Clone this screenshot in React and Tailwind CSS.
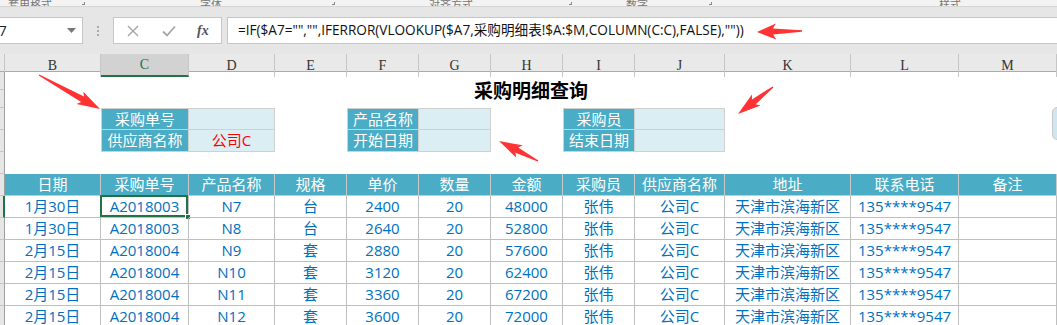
import React from "react";

const COLS =
  "grid grid-cols-[5px_96px_88px_86px_72px_72px_72px_72px_72px_90px_126px_108px_98px]";
const CJK = "font-['Open_Sans','Noto_Sans_CJK_SC',sans-serif]";

const letters = ["B", "C", "D", "E", "F", "G", "H", "I", "J", "K", "L", "M"];
const headers = ["日期", "采购单号", "产品名称", "规格", "单价", "数量", "金额", "采购员", "供应商名称", "地址", "联系电话", "备注"];
const rows = [
  ["1月30日", "A2018003", "N7", "台", "2400", "20", "48000"],
  ["1月30日", "A2018003", "N8", "台", "2640", "20", "52800"],
  ["2月15日", "A2018004", "N9", "套", "2880", "20", "57600"],
  ["2月15日", "A2018004", "N10", "套", "3120", "20", "62400"],
  ["2月15日", "A2018004", "N11", "套", "3360", "20", "67200"],
  ["2月15日", "A2018004", "N12", "套", "3600", "20", "72000"],
];

function arrow(x1, y1, x2, y2, head = 20, wing = 8, neck = 3, tail = 0.7) {
  const dx = x2 - x1, dy = y2 - y1, L = Math.hypot(dx, dy);
  const ux = dx / L, uy = dy / L, nx = -uy, ny = ux;
  const bx = x2 - ux * head, by = y2 - uy * head;
  const wx = x2 - ux * (head + 3), wy = y2 - uy * (head + 3);
  const p = [
    [x1 + nx * tail, y1 + ny * tail],
    [bx + nx * neck, by + ny * neck],
    [wx + nx * wing, wy + ny * wing],
    [x2, y2],
    [wx - nx * wing, wy - ny * wing],
    [bx - nx * neck, by - ny * neck],
    [x1 - nx * tail, y1 - ny * tail],
  ];
  return p.map((q) => q[0].toFixed(1) + "," + q[1].toFixed(1)).join(" ");
}

function RowHead({ active }) {
  return (
    <div
      className={
        "bg-[#e6e6e6] border-b border-[#c6c6c6] " +
        (active ? "border-r-2 border-r-[#217346]" : "border-r border-r-[#9f9f9f]")
      }
    />
  );
}

function Label({ children, top }) {
  return (
    <div
      className={
        "bg-[#4bacc6] text-white text-[15px] flex items-center justify-center border-l border-r border-b border-[#d0d0d0] " +
        (top ? "border-t" : "")
      }
    >
      {children}
    </div>
  );
}
function Value({ children, top }) {
  return (
    <div
      className={
        "bg-[#daeef3] text-[#ff0000] text-[15px] flex items-center justify-center border-r border-b border-[#d0d0d0] " +
        (top ? "border-t" : "")
      }
    >
      {children}
    </div>
  );
}

export default function App() {
  return (
    <div className={"relative w-[1057px] h-[325px] overflow-hidden bg-white " + CJK}>
      {/* ribbon remnant */}
      <div className="h-[7px] bg-[#f3f3f3] border-b border-[#d5d5d5] flex items-end overflow-hidden text-[11px] leading-[12px] text-[#777]">
        <span className="ml-[8px] w-[74px] mb-[-5px]">套用格式</span>
        <span className="w-[3px] h-[3px] border-r border-b border-[#888] mb-[1px]" />
        <span className="ml-[115px] w-[132px] mb-[-5px]">字体</span>
        <span className="w-[3px] h-[3px] border-r border-b border-[#888] mb-[1px]" />
        <span className="ml-[94px] w-[140px] mb-[-5px]">对齐方式</span>
        <span className="w-[3px] h-[3px] border-r border-b border-[#888] mb-[1px]" />
        <span className="ml-[54px] w-[83px] mb-[-5px]">数字</span>
        <span className="w-[3px] h-[3px] border-r border-b border-[#888] mb-[1px]" />
        <span className="ml-[227px] mb-[-5px]">样式</span>
      </div>
      <div className="h-[10px] bg-[#e6e6e6]" />
      {/* formula bar */}
      <div className="h-[27px] bg-[#e6e6e6] flex">
        <div className="w-[83px] bg-white border border-[#c6c6c6] border-l-0 flex items-center justify-between pr-[6px] overflow-hidden">
          <span className="text-[14px] text-[#222] -ml-[10px]">A7</span>
          <svg width="9" height="5" viewBox="0 0 9 5"><path d="M0 0h9L4.5 5z" fill="#777" /></svg>
        </div>
        <div className="w-[30px] flex flex-col items-center justify-center gap-[2px]">
          <span className="w-[2px] h-[2px] bg-[#aaa]" />
          <span className="w-[2px] h-[2px] bg-[#aaa]" />
          <span className="w-[2px] h-[2px] bg-[#aaa]" />
        </div>
        <div className="w-[109px] bg-white border border-[#c6c6c6] flex items-center">
          <svg className="ml-[13px]" width="12" height="12" viewBox="0 0 12 12">
            <path d="M1 1L11 11M11 1L1 11" stroke="#a6a6a6" strokeWidth="1.4" />
          </svg>
          <svg className="ml-[23px]" width="14" height="12" viewBox="0 0 14 12">
            <path d="M1 6.5L5 10.5L13 1.5" stroke="#a6a6a6" strokeWidth="1.8" fill="none" />
          </svg>
          <span className="ml-[21px] text-[14px] italic font-['Liberation_Serif',serif] text-[#555] font-bold">fx</span>
        </div>
        <div className="ml-[5px] flex-1 bg-white border border-[#c6c6c6] border-r-0 flex items-center pl-[10px] text-[13.6px] text-[#111] whitespace-nowrap">
          =IF($A7="","",IFERROR(VLOOKUP($A7,采购明细表!$A:$M,COLUMN(C:C),FALSE),""))
        </div>
      </div>
      <div className="h-[10px] bg-[#e6e6e6]" />
      {/* column headers */}
      <div className={COLS + " h-[18px] bg-[#e9e9e9] border-b border-[#ababab]"}>
        <div className="border-r border-[#c6c6c6]" />
        {letters.map((l) => (
          <div
            key={l}
            className={
              "flex items-center justify-center text-[14px] font-['Liberation_Serif',serif] border-r border-[#c6c6c6] " +
              (l === "C" ? "bg-[#d2d2d2] text-[#217346] border-b-2 border-b-[#217346]" : "text-[#333]")
            }
          >
            {l}
          </div>
        ))}
      </div>
      {/* sheet */}
      <div className={COLS + " grid-rows-[18px_18px_22px_22px_22px_22px_22px_22px_22px_22px_22px_22px]"}>
        <RowHead />
        <div className="col-span-12 row-span-2 flex items-center justify-center text-[19px] font-bold text-black font-['Noto_Sans_CJK_SC',sans-serif]">
          采购明细查询
        </div>
        <RowHead />
        {/* row 3 */}
        <RowHead />
        <div />
        <Label top>采购单号</Label>
        <Value top></Value>
        <div />
        <Label top>产品名称</Label>
        <Value top></Value>
        <div />
        <Label top>采购员</Label>
        <Value top></Value>
        <div className="col-span-3" />
        {/* row 4 */}
        <RowHead />
        <div />
        <Label>供应商名称</Label>
        <Value>公司C</Value>
        <div />
        <Label>开始日期</Label>
        <Value></Value>
        <div />
        <Label>结束日期</Label>
        <Value></Value>
        <div className="col-span-3" />
        {/* row 5 */}
        <RowHead />
        <div className="col-span-12" />
        {/* header row */}
        <RowHead />
        {headers.map((h) => (
          <div
            key={h}
            className="bg-[#4bacc6] text-white text-[15px] flex items-center justify-center border-r border-b border-[#c9c9c9]"
          >
            {h}
          </div>
        ))}
        {rows.map((r, i) => {
          const cells = [...r, "张伟", "公司C", "天津市滨海新区", "135****9547", ""];
          return (
            <React.Fragment key={i}>
              <RowHead active={i === 0} />
              {cells.map((c, j) => (
                <div
                  key={j}
                  className="relative text-[#0070c0] text-[15px] flex items-center justify-center border-r border-b border-[#bfbfbf] whitespace-nowrap"
                >
                  {c}
                  {i === 0 && j === 1 && (
                    <>
                      <div className="absolute -left-[1px] -top-[1px] -right-[0px] -bottom-[0px] border-2 border-[#217346]" />
                      <div className="absolute -right-[3px] -bottom-[3px] w-[6px] h-[6px] bg-[#217346] border border-white" />
                    </>
                  )}
                </div>
              ))}
            </React.Fragment>
          );
        })}
      </div>
      {/* right-edge sliver */}
      <div className="absolute left-[1052px] top-[107px] w-[10px] h-[33px] rounded-[5px] bg-[#cfe5ef] border border-[#c9c9c9]" />
      {/* arrows */}
      <svg className="absolute inset-0 pointer-events-none" width="1057" height="325">
        <polygon points={arrow(39, 75, 100, 109, 20, 7, 3)} fill="#ff3333" />
        <polygon points={arrow(538, 161, 499, 141, 20, 7, 3)} fill="#ff3333" />
        <polygon points={arrow(773, 87, 738, 114, 20, 7, 3)} fill="#ff3333" />
        <polygon points={arrow(802, 31, 757, 32, 16, 8, 3)} fill="#ff3333" />
      </svg>
    </div>
  );
}
